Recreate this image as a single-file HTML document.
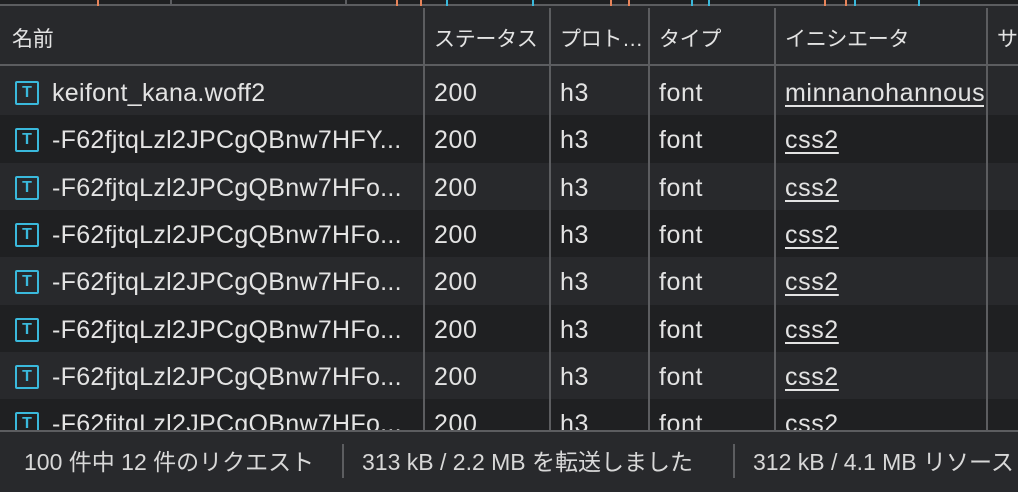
<!DOCTYPE html><html><head><meta charset="utf-8"><style>
*{margin:0;padding:0;box-sizing:border-box}
body{width:1018px;height:490px;overflow:hidden;background:#28292c;font-family:"Liberation Sans","Noto Sans CJK JP",sans-serif;color:#e3e3e3;font-size:25px;position:relative}
.top{position:absolute;left:0;top:0;width:1018px;height:6px;background:#1f2022;border-bottom:2px solid #5c5d60}
.tick{position:absolute;top:0;width:2px;height:6px}
.vl{position:absolute;width:2px;background:#5c5d60}
.row{position:absolute;left:0;width:1018px;height:47.3px}
.c{position:absolute;top:2px;line-height:47px;white-space:nowrap;overflow:hidden;letter-spacing:0.6px}
.h .c{font-size:21px;top:3px;line-height:58px;letter-spacing:-0.3px}
.ico{position:absolute;left:15px;width:24px;height:24px;border:2.5px solid #3ab9dc;border-radius:2px;color:#3ab9dc;font-size:16px;font-weight:bold;text-align:center;line-height:19px}
u{text-decoration-thickness:2px;text-underline-offset:4px}
.foot{position:absolute;left:0;top:430px;width:1018px;height:60px;background:#28292c;border-top:2px solid #5c5d60;line-height:60px;font-size:23px;color:#d8d8d8}
.sep{position:absolute;top:12px;width:2px;height:34px;background:#5c5d60}
</style></head><body>
<div class="top">
<div class="tick" style="left:97px;background:#e8845a"></div>
<div class="tick" style="left:170px;background:#5c5d60"></div>
<div class="tick" style="left:345px;background:#5c5d60"></div>
<div class="tick" style="left:396px;background:#e8845a"></div>
<div class="tick" style="left:420px;background:#e8845a"></div>
<div class="tick" style="left:446px;background:#3ab9dc"></div>
<div class="tick" style="left:532px;background:#3ab9dc"></div>
<div class="tick" style="left:610px;background:#e8845a"></div>
<div class="tick" style="left:628px;background:#e8845a"></div>
<div class="tick" style="left:691px;background:#3ab9dc"></div>
<div class="tick" style="left:708px;background:#3ab9dc"></div>
<div class="tick" style="left:824px;background:#e8845a"></div>
<div class="tick" style="left:845px;background:#e8845a"></div>
<div class="tick" style="left:854px;background:#3ab9dc"></div>
<div class="tick" style="left:918px;background:#3ab9dc"></div>
</div>
<div class="row h" style="top:8px;height:58px;background:#28292c;border-bottom:2px solid #5c5d60">
<div class="c" style="left:12px">名前</div>
<div class="c" style="left:434px">ステータス</div>
<div class="c" style="left:560px">プロト…</div>
<div class="c" style="left:659px">タイプ</div>
<div class="c" style="left:785px">イニシエータ</div>
<div class="c" style="left:997px">サ</div>
</div>
<div id="rows"></div>
<div class="vl" style="left:423px;top:8px;height:422px"></div>
<div class="vl" style="left:549px;top:8px;height:422px"></div>
<div class="vl" style="left:648px;top:8px;height:422px"></div>
<div class="vl" style="left:774px;top:8px;height:422px"></div>
<div class="vl" style="left:986px;top:8px;height:422px"></div>
<div class="foot">
<span style="position:absolute;left:24px">100 件中 12 件のリクエスト</span>
<div class="sep" style="left:342px"></div>
<span style="position:absolute;left:362px">313 kB / 2.2 MB を転送しました</span>
<div class="sep" style="left:733px"></div>
<span style="position:absolute;left:753px;white-space:nowrap">312 kB / 4.1 MB リソース</span>
</div>
<script>
var names=["keifont_kana.woff2","-F62fjtqLzl2JPCgQBnw7HFY...","-F62fjtqLzl2JPCgQBnw7HFo...","-F62fjtqLzl2JPCgQBnw7HFo...","-F62fjtqLzl2JPCgQBnw7HFo...","-F62fjtqLzl2JPCgQBnw7HFo...","-F62fjtqLzl2JPCgQBnw7HFo...","-F62fjtqLzl2JPCgQBnw7HFo..."];
var h="";
for(var i=0;i<8;i++){var t=68+i*47.3;
h+='<div class="row" style="top:'+t+'px;background:'+(i%2?'#1f2022':'#28292c')+'"><div class="ico" style="top:13px">T</div><div class="c" style="left:52px;width:360px;letter-spacing:0.3px">'+names[i]+'</div><div class="c" style="left:434px">200</div><div class="c" style="left:560px">h3</div><div class="c" style="left:659px">font</div><div class="c" style="left:785px;width:200px"><u>'+(i==0?'minnanohannousyou':'css2')+'</u></div></div>';}
document.getElementById('rows').innerHTML=h;
</script>
</body></html>
